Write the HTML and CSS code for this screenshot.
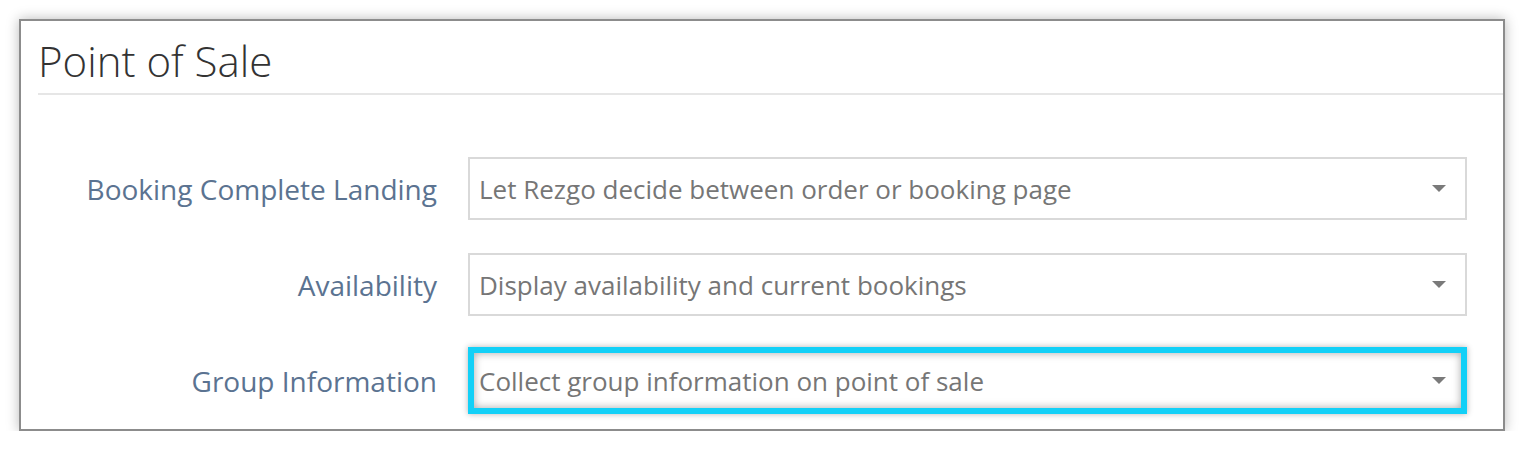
FILE: index.html
```html
<!DOCTYPE html>
<html>
<head>
<meta charset="utf-8">
<link rel="stylesheet" href="styles.css">
</head>
<body>
<div class="panel">
  <div class="panel-head">
    <h1 class="panel-title">Point of Sale</h1>
  </div>
  <div class="form">
    <div class="row">
      <label class="label">Booking Complete Landing</label>
      <div class="select">
        <span class="value">Let Rezgo decide between order or booking page</span>
        <span class="caret"></span>
      </div>
    </div>
    <div class="row">
      <label class="label">Availability</label>
      <div class="select">
        <span class="value">Display availability and current bookings</span>
        <span class="caret"></span>
      </div>
    </div>
    <div class="row row-hl">
      <label class="label">Group Information</label>
      <div class="select select-hl">
        <span class="value">Collect group information on point of sale</span>
        <span class="caret"></span>
      </div>
    </div>
  </div>
</div>
</body>
</html>
```

FILE: styles.css
```css
html, body {
  margin: 0;
  padding: 0;
  background: #ffffff;
}
body {
  padding: 19px 0 0 19px;
  font-family: "Open Sans", "Noto Sans", sans-serif;
}
.panel {
  box-sizing: border-box;
  width: 1486px;
  height: 412px;
  border: 2px solid #8c8c8c;
  background: #ffffff;
  box-shadow: 0 0 12px rgba(0, 0, 0, 0.28);
}
.panel-head {
  margin-left: 17px;
  border-bottom: 2px solid #e6e6e6;
  height: 74px;
  box-sizing: border-box;
}
.panel-title {
  margin: 0;
  padding-top: 14px;
  font-weight: 300;
  font-size: 42px;
  line-height: 52px;
  color: #333333;
}
.form {
  padding-top: 62px;
  display: flex;
  flex-direction: column;
  gap: 33px;
}
.row {
  display: flex;
  align-items: center;
  height: 63px;
}
.label {
  width: 416px;
  text-align: right;
  padding-right: 31px;
  font-size: 28px;
  color: #5b7391;
}
.select {
  box-sizing: border-box;
  width: 999px;
  height: 63px;
  border: 2px solid #d9d9d9;
  display: flex;
  align-items: center;
  justify-content: space-between;
  padding: 0 19px 0 9px;
}
.value {
  font-size: 26px;
  color: #767676;
}
.caret {
  width: 0;
  height: 0;
  border-left: 7px solid transparent;
  border-right: 7px solid transparent;
  border-top: 7px solid #7a7a7a;
}
.row-hl {
  margin-top: -2px;
  height: 67px;
}
.select-hl {
  height: 67px;
  border: 6px solid #12d0f7;
  padding: 0 15px 0 5px;
  box-shadow: inset 0 0 8px rgba(0, 0, 0, 0.35), 0 0 6px rgba(0, 0, 0, 0.3);
}
```
